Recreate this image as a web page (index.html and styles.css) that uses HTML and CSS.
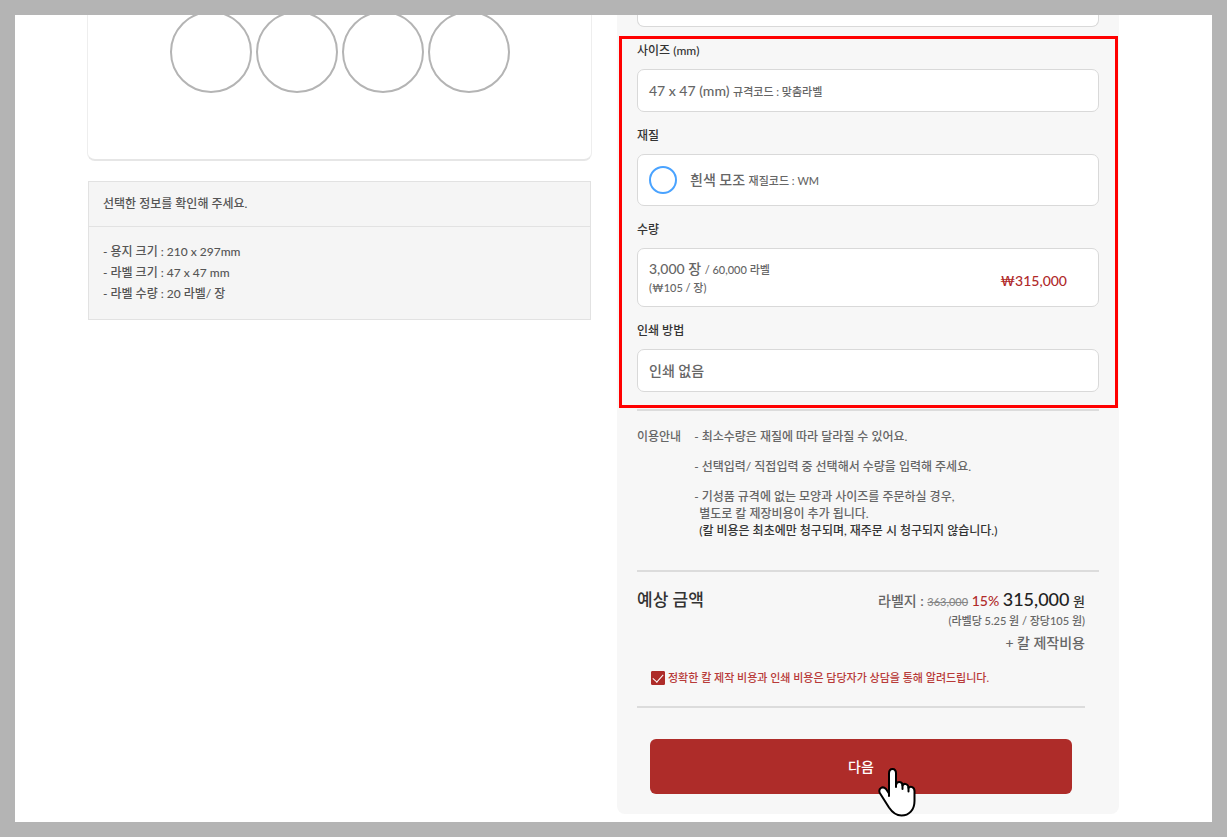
FILE: index.html
```
<!DOCTYPE html>
<html lang="ko">
<head>
    <meta charset="UTF-8">
    <meta name="viewport" content="width=device-width, initial-scale=1.0">
    <title>라벨 주문</title>
    <link rel="stylesheet" href="styles.css">
</head>
<body>
    <main class="order-page">
        <!-- Preview and summary -->
        <section class="summary-column">
            <div class="label-preview">
                <span class="label-shape"></span>
                <span class="label-shape"></span>
                <span class="label-shape"></span>
                <span class="label-shape"></span>
            </div>
            <div class="summary">
                <h2>선택한 정보를 확인해 주세요.</h2>
                <ul>
                    <li>- 용지 크기 : 210 x 297mm</li>
                    <li>- 라벨 크기 : 47 x 47 mm</li>
                    <li>- 라벨 수량 : 20 라벨/ 장</li>
                </ul>
            </div>
        </section>

        <!-- Order form -->
        <form class="order-form">
            <div class="option-tail"></div>
            <div class="options">
                <h3 id="sizeLabel">사이즈 (mm)</h3>
                <button type="button" class="option" aria-describedby="sizeLabel">
                    <span>47 x 47 (mm) <small>규격코드 : 맞춤라벨</small></span>
                </button>
                <h3 id="materialLabel">재질</h3>
                <button type="button" class="option option-material" aria-describedby="materialLabel">
                    <span class="swatch"></span>
                    <span>흰색 모조 <small>재질코드 : WM</small></span>
                </button>
                <h3 id="amountLabel">수량</h3>
                <button type="button" class="option option-amount" aria-describedby="amountLabel">
                    <span class="amount">3,000 장 <small>/ 60,000 라벨</small><br><small>(₩105 / 장)</small></span>
                    <span class="amount-price">₩315,000</span>
                </button>
                <h3 id="printLabel">인쇄 방법</h3>
                <button type="button" class="option" aria-describedby="printLabel">
                    <span>인쇄 없음</span>
                </button>
            </div>

            <div class="guide">
                <h4>이용안내</h4>
                <ul>
                    <li>- 최소수량은 재질에 따라 달라질 수 있어요.</li>
                    <li>- 선택입력/ 직접입력 중 선택해서 수량을 입력해 주세요.</li>
                    <li>
                        - 기성품 규격에 없는 모양과 사이즈를 주문하실 경우,
                        <p>별도로 칼 제장비용이 추가 됩니다.</p>
                        <p><strong>(칼 비용은 최초에만 청구되며, 재주문 시 청구되지 않습니다.)</strong></p>
                    </li>
                </ul>
            </div>

            <div class="estimate">
                <h2>예상 금액</h2>
                <div class="estimate-price">
                    <p class="price-line">라벨지 : <del>363,000</del> <em>15%</em> <strong>315,000</strong> <b>원</b></p>
                    <p class="price-unit">(라벨당 5.25 원 / 장당105 원)</p>
                    <p class="price-extra">+ 칼 제작비용</p>
                </div>
            </div>

            <div class="agree">
                <input type="checkbox" id="agree" checked>
                <label for="agree">정확한 칼 제작 비용과 인쇄 비용은 담당자가 상담을 통해 알려드립니다.</label>
            </div>

            <button type="button" class="next-button">다음
                <svg class="pointer" viewBox="0 0 38 50" aria-hidden="true">
                    <path d="M11 29V6.500C11 0.500 18 0.500 18 6.500V18C19 13.500 24.500 14.500 24.500 18.500C26 15.500 30.500 17 30.500 21C32.500 18.500 36.500 20 36.500 24V34C36.500 43 31 48.500 23.500 48.500C17.500 48.500 14 45 11 40.500L1.800 26C0 21.500 4.500 18.500 8 22L11 26.500Z" fill="#fff" stroke="#000" stroke-width="2" stroke-linejoin="round"/>
                    <path d="M18 16V20M24.500 18V22M30.500 20.500V24.500" fill="none" stroke="#000" stroke-width="2" stroke-linecap="round"/>
                </svg>
            </button>
        </form>
    </main>
</body>
</html>
```

FILE: styles.css
```
* {
    box-sizing: border-box;
}

body {
    margin: 0;
    padding: 15px;
    min-height: 100vh;
    display: flex;
    background-color: #b4b4b4;
    color: #666;
    font-family: Lato, "Noto Sans CJK KR", sans-serif;
    font-size: 12px;
    font-weight: 500;
}

h2, h3, h4, p, ul {
    margin: 0;
    padding: 0;
    font-size: 12px;
    font-weight: 500;
}

ul {
    list-style: none;
}

button {
    font: inherit;
    color: inherit;
}

.order-page {
    flex: 1;
    display: grid;
    grid-template-columns: 505fr 502fr;
    column-gap: 25px;
    align-items: start;
    padding: 0 93px 8px 72px;
    background-color: #fff;
}

/* Left column */
.label-preview {
    height: 146px;
    display: flex;
    justify-content: center;
    align-items: flex-end;
    gap: 4px;
    padding-bottom: 66px;
    overflow: hidden;
    border: 1px solid #eee;
    border-top: none;
    border-bottom: 2px solid #e6e6e6;
    border-radius: 0 0 8px 8px;
}

.label-shape {
    flex: none;
    width: 82px;
    height: 82px;
    border: 2px solid #b4b4b4;
    border-radius: 50%;
}

.summary {
    margin: 20px 1px 0;
    background-color: #f5f5f5;
    border: 1px solid #e2e2e2;
}

.summary h2 {
    padding: 12px 14px 13px;
    line-height: 19px;
    color: #555;
    border-bottom: 1px solid #e2e2e2;
}

.summary ul {
    padding: 14px 14px 15px;
    line-height: 21px;
}

.summary li {
    color: #555;
}

/* Right column */
.order-form {
    padding: 0 20px 20px;
    background-color: #f7f7f7;
    border-radius: 0 0 8px 8px;
}

.option-tail {
    height: 12px;
    background-color: #fff;
    border: 1px solid #d9d9d9;
    border-top: none;
    border-radius: 0 0 7px 7px;
}

.options {
    position: relative;
}

.options::after {
    content: "";
    position: absolute;
    inset: 9px -19px -16px -18px;
    border: 3px solid #f00;
    pointer-events: none;
}

.options h3 {
    padding: 15px 0 9px;
    line-height: 18px;
    color: #333;
}

.option {
    width: 100%;
    min-height: 43px;
    display: flex;
    align-items: center;
    padding: 0 11px;
    background-color: #fff;
    border: 1px solid #d9d9d9;
    border-radius: 7px;
    font-size: 14px;
    line-height: 17px;
    text-align: left;
}

.option small {
    font-size: 11px;
}

.option-material {
    min-height: 52px;
}

.swatch {
    width: 28px;
    height: 28px;
    margin-right: 13px;
    border: 2px solid #4aa3ff;
    border-radius: 50%;
}

.option-amount {
    min-height: 59px;
    justify-content: space-between;
    padding-right: 31px;
}

.amount-price {
    padding-top: 5px;
    color: #b02a2a;
}

.guide {
    display: flex;
    gap: 13px;
    margin-top: 17px;
    padding: 17px 0 31px;
    border-top: 2px solid #dcdcdc;
    border-bottom: 2px solid #dcdcdc;
    line-height: 17px;
}

.guide li + li {
    margin-top: 13px;
}

.guide p {
    padding-left: 5px;
}

.guide strong {
    color: #333;
    font-weight: 500;
}

.estimate {
    display: flex;
    justify-content: space-between;
    padding: 16px 14px 0 0;
}

.estimate h2 {
    font-size: 17px;
    line-height: 24px;
    color: #333;
}

.estimate-price {
    text-align: right;
}

.price-line {
    font-size: 14px;
    line-height: 23px;
}

.price-line del {
    font-size: 11px;
    color: #888;
}

.price-line em {
    font-style: normal;
    color: #b02a2a;
}

.price-line strong {
    font-size: 18px;
    font-weight: 500;
    color: #222;
}

.price-line b {
    font-size: 13px;
    font-weight: 500;
    color: #333;
}

.price-unit {
    font-size: 11px;
    line-height: 15px;
}

.price-extra {
    padding-top: 5px;
    font-size: 14px;
    line-height: 20px;
}

.agree {
    display: flex;
    align-items: center;
    gap: 3px;
    margin-right: 14px;
    padding: 15px 0 18px 14px;
    border-bottom: 2px solid #dcdcdc;
    font-size: 11px;
    line-height: 20px;
    color: #b83a38;
}

.agree input {
    appearance: none;
    display: flex;
    justify-content: center;
    width: 14px;
    height: 14px;
    margin: 0;
    background-color: #fff;
    border: 1px solid #ae2c29;
    border-radius: 1px;
}

.agree input:checked {
    background-color: #ae2c29;
}

.agree input:checked::after {
    content: "";
    width: 5px;
    height: 9px;
    border: solid #fff;
    border-width: 0 1px 1px 0;
    transform: rotate(42deg);
}

.next-button {
    position: relative;
    display: block;
    width: calc(100% - 40px);
    height: 55px;
    margin: 31px 0 0 13px;
    padding: 0 0 2px;
    background-color: #ae2c29;
    border: none;
    border-radius: 6px;
    color: #fff;
    font-size: 14px;
}

.pointer {
    position: absolute;
    left: calc(50% + 17px);
    top: 28px;
    width: 38px;
    height: 50px;
}
```
